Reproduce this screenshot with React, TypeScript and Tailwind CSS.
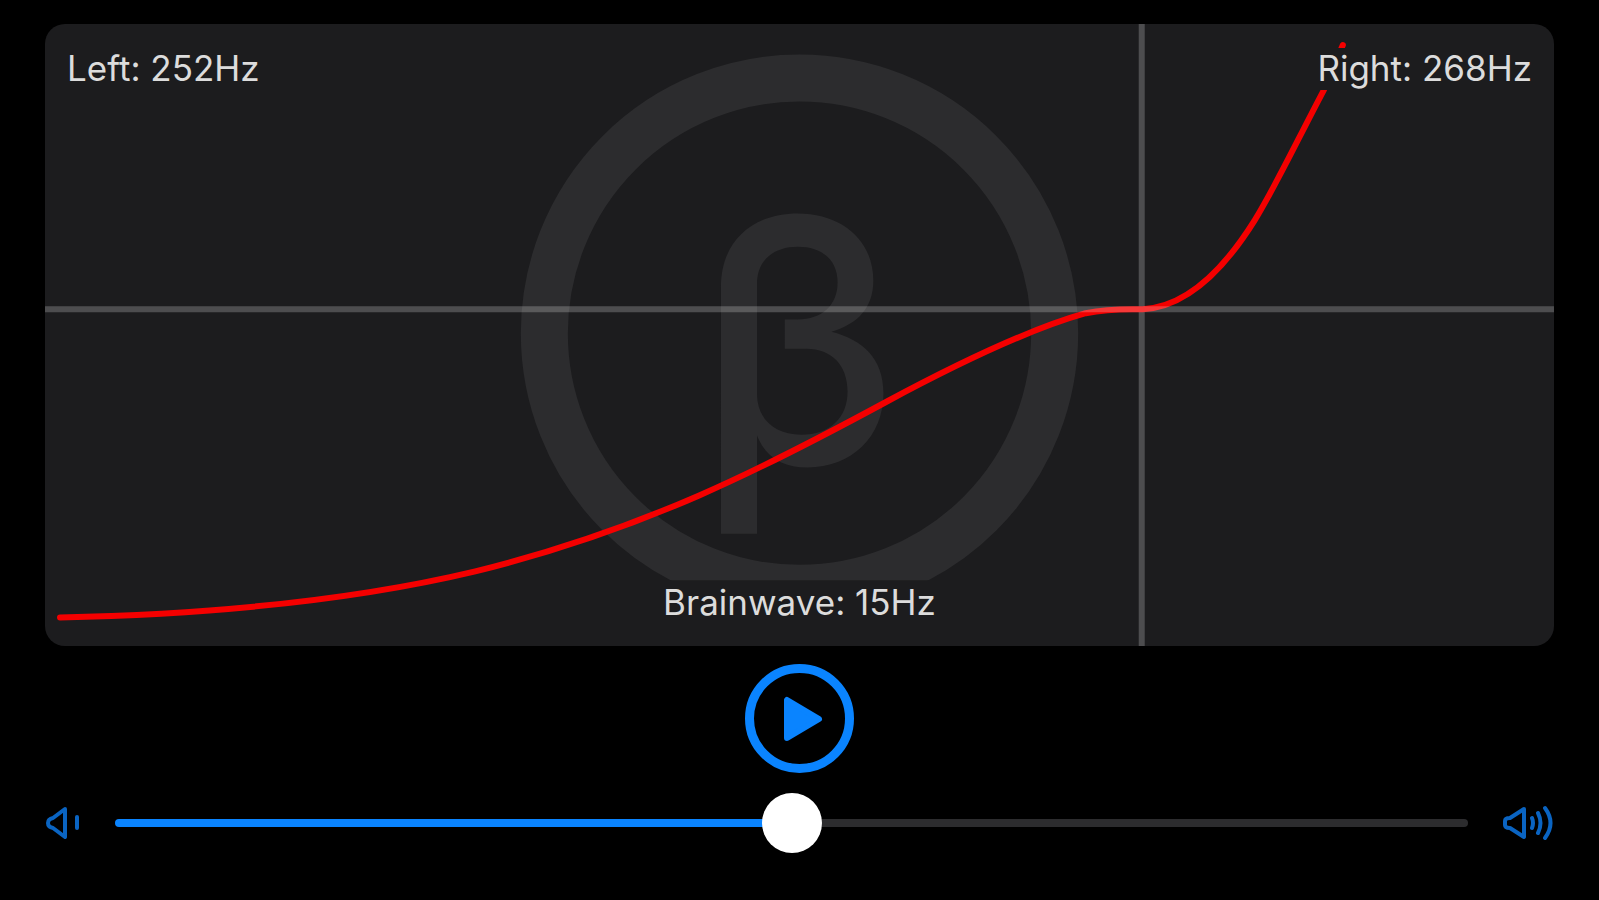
import { useState } from "react";

const CURVE =
  "M15 593 C160 590 300 578 430 547 C600 505 720 443 840 378 C920 335 990 303 1040 289 C1065 284 1080 285 1097 285 C1137 283 1174 252 1209 196 C1232 158 1251 117 1278 66 L1297 21";

function BrainwaveChart() {
  return (
    <section
      aria-label="Brainwave chart"
      className="relative overflow-hidden rounded-[20px] bg-[#1c1c1e]"
    >
      <svg viewBox="0 0 1508 622" className="block h-auto w-full" aria-hidden="true">
        <defs>
          <clipPath id="badge">
            <rect x="0" y="0" width="1508" height="556" />
          </clipPath>
        </defs>
        <g clipPath="url(#badge)">
          <circle cx="754" cy="309" r="255" fill="none" stroke="#2c2c2e" strokeWidth="47" />
          <text
            x="753"
            y="440"
            textAnchor="middle"
            fill="#2c2c2e"
            className="font-['Inter',sans-serif] text-[340px] font-medium"
          >
            β
          </text>
        </g>
        <path d={CURVE} fill="none" stroke="#f40000" strokeWidth="6" strokeLinecap="round" />
        <path d="M0 285H1508M1096 0V622" fill="none" stroke="#fff" strokeOpacity="0.22" strokeWidth="6" />
      </svg>
      <div className="absolute inset-x-[22px] top-6 flex items-start justify-between font-['Inter',sans-serif] text-[35px] leading-10 text-[#dcdcdc]">
        <p>Left: 252Hz</p>
        <p className="bg-[#1c1c1e] pb-0.5">Right: 268Hz</p>
      </div>
      <p className="absolute inset-x-0 bottom-6 text-center font-['Inter',sans-serif] text-[35px] leading-10 text-[#dcdcdc]">
        Brainwave: 15Hz
      </p>
    </section>
  );
}

function SpeakerLow() {
  return (
    <svg viewBox="0 0 36 36" className="size-9 shrink-0" fill="none" stroke="#0a64c2" strokeWidth="4" strokeLinecap="round" strokeLinejoin="round" aria-hidden="true">
      <path d="M8 13Q3 14 3 18Q3 22 8 23L20 32V4Z" />
      <path d="M32 12V23" />
    </svg>
  );
}

function SpeakerHigh() {
  return (
    <svg viewBox="0 0 52 36" className="h-9 w-13 shrink-0" fill="none" stroke="#0a64c2" strokeWidth="4" strokeLinecap="round" strokeLinejoin="round" aria-hidden="true">
      <path d="M8 13Q3 13 3 16V20Q3 23 8 23L22 32V4Z" />
      <path d="M30 13Q32 18 30 23M36 8Q41 18 36 28M43 3Q54 18 43 33" />
    </svg>
  );
}

export default function App() {
  const [volume, setVolume] = useState(50);
  return (
    <main className="min-h-screen bg-black px-[45px] pt-6">
      <BrainwaveChart />
      <div className="mt-[18px] flex justify-center">
        <button type="button" aria-label="Play" className="flex size-[109px] items-center justify-center rounded-full border-[9px] border-[#0a84ff]">
          <svg viewBox="0 0 110 110" className="size-[110px] shrink-0" aria-hidden="true">
            <path d="M42 36V74L74 55Z" fill="#0a84ff" stroke="#0a84ff" strokeWidth="6" strokeLinejoin="round" />
          </svg>
        </button>
      </div>
      <div className="mt-8 flex items-center gap-[34px]">
        <SpeakerLow />
        <input
          type="range"
          aria-label="Volume"
          min={0}
          max={100}
          value={volume}
          onChange={(e) => setVolume(Number(e.target.value))}
          style={{ backgroundImage: `linear-gradient(to right, #0a84ff ${volume}%, #2c2c2e ${volume}%)` }}
          className="h-2 min-w-0 flex-1 appearance-none rounded-full [&::-webkit-slider-thumb]:size-[60px] [&::-webkit-slider-thumb]:appearance-none [&::-webkit-slider-thumb]:rounded-full [&::-webkit-slider-thumb]:bg-white"
        />
        <SpeakerHigh />
      </div>
    </main>
  );
}
